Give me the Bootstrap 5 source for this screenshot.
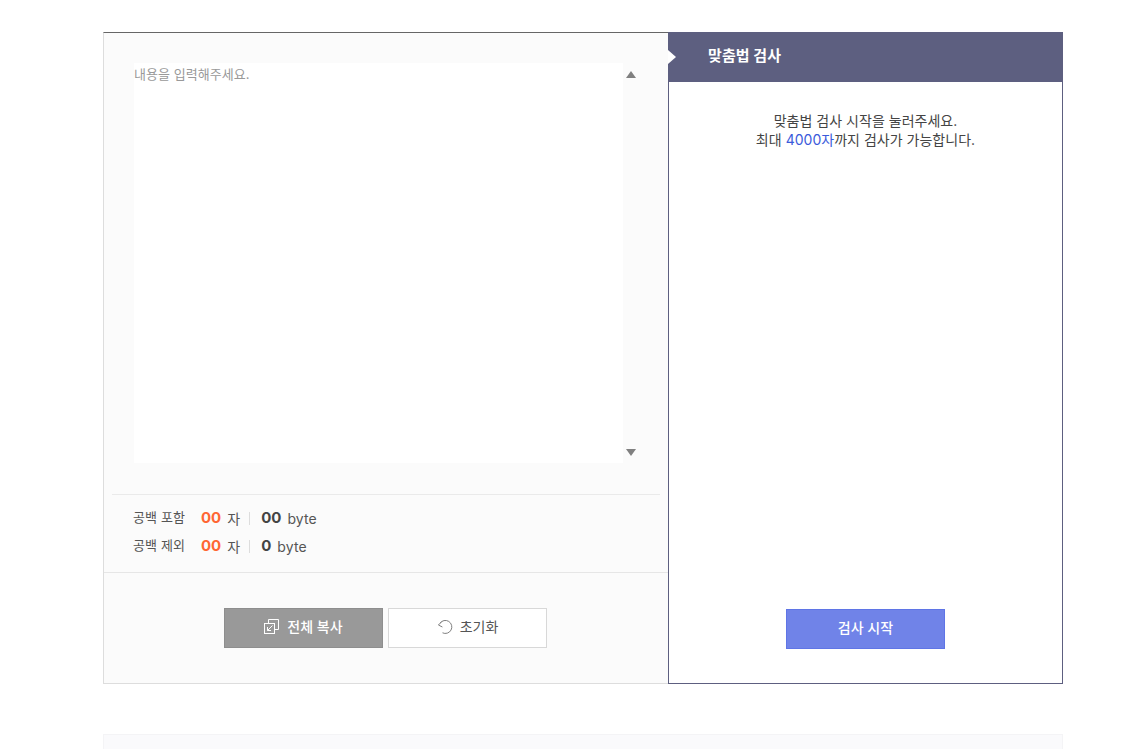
<!doctype html>
<html lang="ko">
<head>
<meta charset="utf-8">
<title>맞춤법 검사</title>
<link href="https://cdn.jsdelivr.net/npm/bootstrap@5.3.0/dist/css/bootstrap.min.css" rel="stylesheet">
<style>
html,body{height:749px;overflow:hidden;background:#fff}
body{font-family:Inter,"Noto Sans CJK KR",sans-serif;font-size:14px;color:#444;letter-spacing:-.2px}
.pagewrap{width:960px;margin:32px 0 0 103px}
.checker{height:652px}
.leftpane{width:565px;background:#fbfbfb;border:1px solid #ddd;border-top-color:#666;border-right:0}
.inputzone{height:461px;padding:30px 0 0 30px}
.inputbox{width:489px;height:400px;border:0;background:#fff;padding:0;font-size:13px;line-height:22px;resize:none;outline:0;font-family:inherit;letter-spacing:.05px;color:#444}
.inputbox::placeholder{color:#999;opacity:1}
.scrollarrows{width:15px;height:400px}
.arrow-up,.arrow-down{width:0;height:0;border-left:5.5px solid transparent;border-right:5.5px solid transparent}
.arrow-up{border-bottom:7px solid #808080;margin-top:8px}
.arrow-down{border-top:7px solid #808080;margin-bottom:7px}
.statsbox{margin:0 8px;height:78px;border-top:1px solid #eaeaea;padding:9px 0 0 21px}
.statline{height:28px;font-size:13px;color:#555}
.statname{width:68px;letter-spacing:.1px}
.countnum{font-size:15px;font-weight:700;color:#ff6633;letter-spacing:0}
.bytenum{font-size:15px;font-weight:700;color:#444;letter-spacing:0}
.statunit{font-size:14px;color:#555;margin-left:6px;letter-spacing:.1px}
.vsep{width:1px;height:13px;background:#ddd;margin:0 11px 0 9px}
.actionzone{border-top:1px solid #e6e6e6;height:111px;padding:35px 1px 0 0;gap:5px}
.actionbtn{width:159px;height:40px;border-radius:0;font-size:14px;display:flex;align-items:center;justify-content:center;gap:8px;padding:0 0 3px;letter-spacing:0}
.btn-copyall{background:#999;border:1px solid #8e8e8e;color:#fff;font-weight:500}
.btn-reset{background:#fff;border:1px solid #d8d8d8;color:#555;gap:7px}
.rightpane{width:395px;background:#fff;border:1px solid #5d5f80}
.resulthead{height:50px;margin:-1px -1px 0;background:#5d5f80;color:#fff;font-size:15px;font-weight:700;padding:0 0 1px 40px;letter-spacing:.1px;position:relative}
.resulthead::before{content:"";position:absolute;left:0;top:18px;border-left:8px solid #fff;border-top:7px solid transparent;border-bottom:7px solid transparent}
.guide{padding-top:29px;font-size:14px;line-height:19px;color:#444;letter-spacing:.02px}
.guide-hl{color:#3b5bdb}
.startwrap{padding-bottom:34px}
.btn-start{width:159px;height:40px;border-radius:0;background:#7083e8;border:1px solid #5f75e6;color:#fff;font-size:14px;font-weight:500;padding:0 0 3px;letter-spacing:0}
.lowerstrip{height:60px;margin-top:50px;background:#fafafc;border:1px solid #f4f4f6}
</style>
</head>
<body>
<div class="pagewrap">
  <div class="checker d-flex">
    <div class="leftpane d-flex flex-column">
      <div class="inputzone d-flex">
        <textarea class="inputbox" placeholder="내용을 입력해주세요."></textarea>
        <div class="scrollarrows d-flex flex-column justify-content-between align-items-center" aria-hidden="true">
          <div class="arrow-up"></div>
          <div class="arrow-down"></div>
        </div>
      </div>
      <div class="statsbox">
        <div class="statline d-flex align-items-center"><span class="statname">공백 포함</span><span class="countnum">00</span><span class="statunit">자</span><span class="vsep"></span><span class="bytenum">00</span><span class="statunit">byte</span></div>
        <div class="statline d-flex align-items-center"><span class="statname">공백 제외</span><span class="countnum">00</span><span class="statunit">자</span><span class="vsep"></span><span class="bytenum">0</span><span class="statunit">byte</span></div>
      </div>
      <div class="actionzone d-flex justify-content-center">
        <button type="button" class="btn actionbtn btn-copyall">
          <svg width="15" height="15" viewBox="0 0 15 15" fill="none" stroke="#fff" stroke-width="1"><path d="M4.5 4.5V.5H14.5V10.5H10.5"/><rect x=".5" y="4.5" width="10" height="10"/><path d="M8.5 6.5L3.5 11.5M3.5 8V11.5H7"/></svg>
          전체 복사
        </button>
        <button type="button" class="btn actionbtn btn-reset">
          <svg width="16" height="16" viewBox="0 0 16 16" fill="none" stroke="#808080" stroke-width="1"><path d="M3 4.2A6.5 6.5 0 1 1 5.5 13.8"/><path d="M4.8 2.6L1.4 6L5.4 8"/></svg>
          초기화
        </button>
      </div>
    </div>
    <div class="rightpane d-flex flex-column">
      <div class="resulthead d-flex align-items-center">맞춤법 검사</div>
      <div class="guide flex-grow-1 text-center">맞춤법 검사 시작을 눌러주세요.<br>최대 <span class="guide-hl">4000자</span>까지 검사가 가능합니다.</div>
      <div class="startwrap text-center"><button type="button" class="btn btn-start">검사 시작</button></div>
    </div>
  </div>
  <div class="lowerstrip"></div>
</div>
<script src="https://cdn.jsdelivr.net/npm/bootstrap@5.3.0/dist/js/bootstrap.bundle.min.js"></script>
</body>
</html>
